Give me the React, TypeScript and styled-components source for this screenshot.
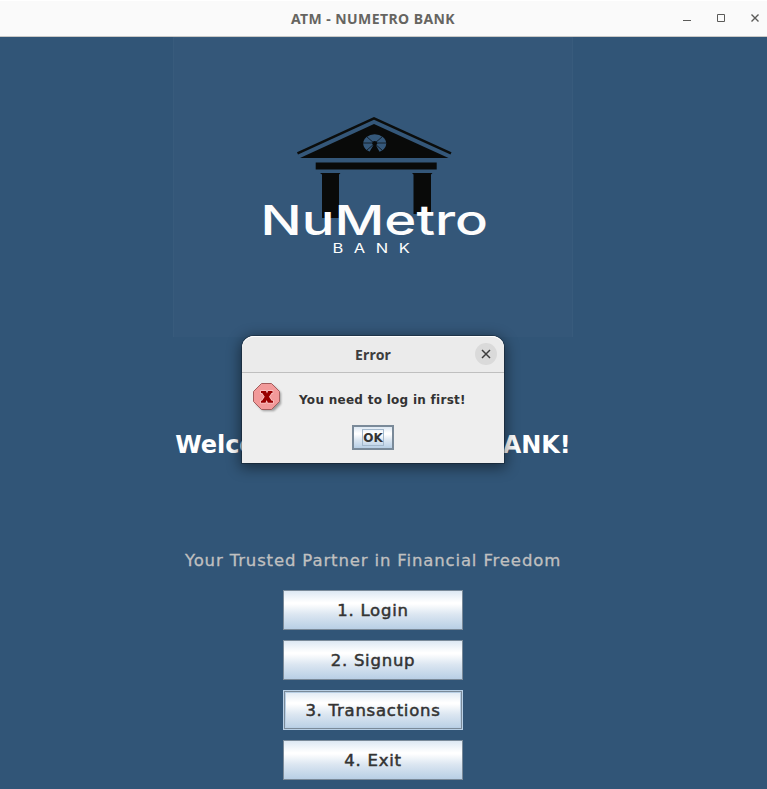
import React from "react";
import styled, { createGlobalStyle, css } from "styled-components";

const GlobalStyle = createGlobalStyle`
  * { box-sizing: border-box; }
  body { margin: 0; background: #315577; overflow: hidden; }
`;

const Window = styled.div`
  position: relative;
  width: 767px;
  height: 789px;
  display: flex;
  flex-direction: column;
  background: #315577;
  font-family: "DejaVu Sans", sans-serif;
`;

const TitleBar = styled.header`
  flex: none;
  height: 37px;
  display: grid;
  grid-template-columns: 1fr auto 1fr;
  align-items: center;
  background: #fafafa;
  border-top: 1px solid #fff;
  border-bottom: 1px solid #c9c9c7;
`;

const WindowTitle = styled.h1`
  grid-column: 2;
  margin: 0 0 0 -21px;
  font: 700 14px/20px "Noto Sans", sans-serif;
  letter-spacing: 0.43px;
  color: #666561;
  white-space: nowrap;
`;

const WindowControls = styled.div`
  justify-self: end;
  display: flex;
  padding-right: 5px;
  color: #5a5a58;
`;

const Content = styled.main`
  flex: 1;
  display: flex;
  flex-direction: column;
  align-items: center;
  padding-right: 21px;
`;

const LogoPanel = styled.div`
  flex: none;
  width: 400px;
  height: 300px;
  background: #345779;
  border: 1px solid #385b7c;
  border-width: 1px 1px 0;

  svg { display: block; margin: -1px; }
`;

const Welcome = styled.h2`
  margin: 0;
  padding-top: 1px;
  height: 216px;
  line-height: 215px;
  font-size: 24px;
  font-weight: 700;
  letter-spacing: -0.05px;
  color: #fff;
  white-space: nowrap;
`;

const Tagline = styled.p`
  margin: 0;
  height: 37px;
  line-height: 16px;
  font-size: 16.500px;
  letter-spacing: 0.86px;
  color: #c0c0c0;
  -webkit-text-stroke: 0.3px #c0c0c0;
  white-space: nowrap;
`;

const Menu = styled.nav`
  display: flex;
  flex-direction: column;
  gap: 10px;
`;

const metalFill = css`
  background: linear-gradient(#dde8f3 0%, #fff 30%, #fff 34%, #dbe6f1 62%, #b8cfe5 100%);
`;

const MenuButton = styled.button<{ $focused?: boolean }>`
  width: 180px;
  height: 40px;
  padding: 2px 0 0;
  border: 1px solid #7a8a99;
  ${metalFill}
  font: 400 16.500px/20px "DejaVu Sans", sans-serif;
  letter-spacing: 0.75px;
  color: #333;
  -webkit-text-stroke: 0.5px #333;
  ${(p) =>
    p.$focused &&
    css`
      border-color: #b8cfe5;
      box-shadow: inset 0 0 0 1px #7a8a99, inset 0 0 0 2px #b8cfe5;
    `}
`;

const Dialog = styled.section`
  position: absolute;
  left: 242px;
  top: 336px;
  width: 262px;
  height: 127px;
  display: flex;
  flex-direction: column;
  border-radius: 12px 12px 0 0;
  background: #eee;
  box-shadow: 0 0 0 1px rgba(0, 0, 0, 0.25), 0 3px 14px 2px rgba(0, 0, 0, 0.45);
`;

const DialogHeader = styled.header`
  flex: none;
  height: 37px;
  display: grid;
  grid-template-columns: 1fr auto 1fr;
  align-items: center;
  padding: 0 7px;
  border-radius: 12px 12px 0 0;
  background: #ebebeb;
  border-bottom: 1px solid #bfbfbf;
  box-shadow: inset 0 1px #fff;
`;

const DialogTitle = styled.h3`
  grid-column: 2;
  margin: 1px 0 0;
  font: 700 14px/20px "Noto Sans", sans-serif;
  letter-spacing: 0.2px;
  color: #3d3d3d;
`;

const CloseButton = styled.button`
  justify-self: end;
  width: 22px;
  height: 22px;
  padding: 0;
  border: 0;
  border-radius: 50%;
  background: #dadada;

  svg { display: block; }
`;

const DialogBody = styled.div`
  display: grid;
  grid-template-columns: 46px 1fr;
  height: 44px;
  padding: 9px 10px 0;
`;

const Message = styled.p`
  margin: 0;
  padding: 1px 0 0 1px;
  line-height: 35px;
  font-size: 12px;
  font-weight: 700;
  letter-spacing: 0.28px;
  color: #333;
  white-space: nowrap;
`;

const DialogActions = styled.div`
  display: flex;
  justify-content: center;
  padding-top: 8px;
`;

const OkButton = styled.button`
  width: 42px;
  height: 25px;
  display: grid;
  place-items: center;
  padding: 0;
  border: 2px solid #7a8a99;
  ${metalFill}
`;

const OkLabel = styled.span`
  width: 22px;
  height: 17px;
  border: 1px solid #a3b8cc;
  font: 700 12px/16px "DejaVu Sans", sans-serif;
  color: #333;
`;

function BankLogo() {
  return (
    <svg width="400" height="300" viewBox="173 37 400 300">
      <path d="M297.500 153.300 374 118.300 451 153.300" fill="none" stroke="#0b0d0c" strokeWidth="2.500" />
      <path d="M300 158 374 124 448.500 158Z" fill="#090a09" />
      <ellipse cx="374.700" cy="143.500" rx="11.500" ry="9.200" fill="#35587a" />
      <g stroke="#0b1117" strokeWidth="0.8">
        <path d="M363 143h23M366.500 136.500l16 14M382.500 136.500l-16 14" />
      </g>
      <circle cx="374.700" cy="143.300" r="2.400" fill="#090a09" />
      <path d="M374.700 143 380.500 153.500 378 156h-7l-2.500-2.500Z" fill="#090a09" />
      <path d="M315.700 162.500h121v7h-121zM320 173h20.500l-1.500 1.500v43.500h-17v-43.500zM412 173h20.500l-1.500 1.500v39.500h-17.500v-39.500z" fill="#090a09" />
      <g fill="#fdfdfd" fontFamily="Inter, sans-serif">
        <text x="260.500" y="234.800" fontWeight="500" fontSize="41.500" textLength="227.500" lengthAdjust="spacingAndGlyphs">NuMetro</text>
        <text x="332.500" y="253.300" fontSize="12.500" letterSpacing="8" textLength="88" lengthAdjust="spacingAndGlyphs">BANK</text>
      </g>
    </svg>
  );
}

function ErrorIcon() {
  return (
    <svg width="34" height="34" viewBox="0 0 34 34">
      <defs>
        <filter id="soft" x="-20%" y="-20%" width="150%" height="150%">
          <feGaussianBlur stdDeviation="1.200" />
        </filter>
      </defs>
      <path d="M11 4h11l7 7v11l-7 7H11l-7-7V11z" fill="#000" opacity=".35" filter="url(#soft)" />
      <path d="M9.500 1.500h10l8 8v10l-8 8h-10l-8-8v-10z" fill="#f29a9a" stroke="#a35c5c" />
      <path d="M9 9h5l1 2.500L16 9h4.500v2h-1l-2.500 3.700 2.700 4h1.300v2h-5.200l-1.100-2.700-1.200 2.700H9v-2h1l2.700-4L10.200 11H9z" fill="#900" stroke="#fbcaca" strokeWidth="1.400" paintOrder="stroke" />
    </svg>
  );
}

const menuItems = ["1. Login", "2. Signup", "3. Transactions", "4. Exit"];

export default function App() {
  return (
    <Window>
      <GlobalStyle />
      <TitleBar>
        <WindowTitle>ATM - NUMETRO BANK</WindowTitle>
        <WindowControls>
          <svg width="84" height="20" viewBox="678 9 84 20" fill="none" stroke="currentColor">
            <path d="M683 20.500h8M717.500 14.500h7v7h-7z" />
            <path d="M751.500 14.500l7 7m0-7l-7 7" strokeWidth="1.400" />
          </svg>
        </WindowControls>
      </TitleBar>
      <Content>
        <LogoPanel><BankLogo /></LogoPanel>
        <Welcome>Welcome to NUMETRO BANK!</Welcome>
        <Tagline>Your Trusted Partner in Financial Freedom</Tagline>
        <Menu>
          {menuItems.map((item, i) => (
            <MenuButton key={item} $focused={i === 2}>{item}</MenuButton>
          ))}
        </Menu>
      </Content>
      <Dialog role="dialog">
        <DialogHeader>
          <DialogTitle>Error</DialogTitle>
          <CloseButton aria-label="Close">
            <svg width="22" height="22" viewBox="0 0 22 22" stroke="#3d3d3d" strokeWidth="1.500">
              <path d="M7 7l8 8m0-8l-8 8" />
            </svg>
          </CloseButton>
        </DialogHeader>
        <DialogBody>
          <ErrorIcon />
          <Message>You need to log in first!</Message>
        </DialogBody>
        <DialogActions>
          <OkButton><OkLabel>OK</OkLabel></OkButton>
        </DialogActions>
      </Dialog>
    </Window>
  );
}
